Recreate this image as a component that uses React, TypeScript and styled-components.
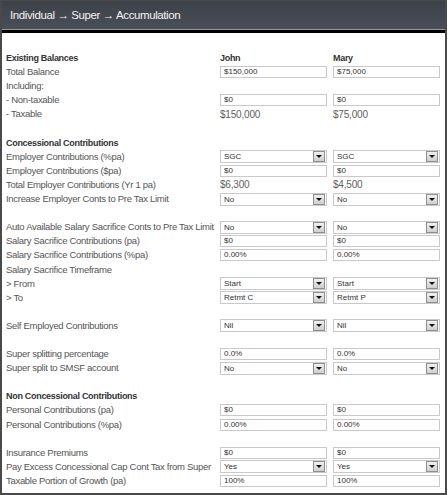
import React, { FC } from 'react';
import styled, { createGlobalStyle } from 'styled-components';

const GlobalStyle = createGlobalStyle`
  html, body {
    margin: 0;
    padding: 0;
    background: #ffffff;
  }
  body {
    font-family: "Liberation Sans", Arial, sans-serif;
  }
`;

const Panel = styled.div`
  width: 443px;
  height: 492px;
  border: 2px solid #4a4a4a;
  border-top: 1px solid #4a4a4a;
  box-sizing: content-box;
  background: #ffffff;
  overflow: hidden;
`;

const Header = styled.div`
  height: 28px;
  background: linear-gradient(#3d4148, #4a4f57);
  border-bottom: 1px solid #9a9a9a;
  display: flex;
  align-items: center;
  padding-left: 8px;
  color: #f2f2f2;
  font-size: 11.5px;
  letter-spacing: -0.4px;
`;

const HeaderRule = styled.div`
  height: 3px;
  background: #000000;
`;

const Body = styled.div`
  padding: 4px 5px 0 4px;
  display: grid;
  grid-template-columns: 208px 107px 107px;
  column-gap: 6px;
  grid-auto-rows: 14.1px;
`;

const Label = styled.div<{ $bold?: boolean }>`
  font-size: ${(p) => (p.$bold ? '9px' : '9.5px')};
  line-height: 14px;
  color: ${(p) => (p.$bold ? '#333333' : '#555555')};
  font-weight: ${(p) => (p.$bold ? 700 : 400)};
  letter-spacing: -0.3px;
  white-space: nowrap;
`;

const Cell = styled.div`
  display: flex;
  align-items: center;
`;

const Value = styled.span<{ $bold?: boolean }>`
  font-size: ${(p) => (p.$bold ? '9px' : '10px')};
  color: ${(p) => (p.$bold ? '#333333' : '#5e5e5e')};
  font-weight: ${(p) => (p.$bold ? 700 : 400)};
  letter-spacing: ${(p) => (p.$bold ? '-0.3px' : '-0.2px')};
`;

const Field = styled.div`
  width: 107px;
  height: 12px;
  box-sizing: border-box;
  border: 1px solid #c9c9c9;
  background: #ffffff;
  font-size: 8px;
  line-height: 10px;
  color: #333333;
  padding-left: 3px;
`;

const SelectBox = styled.div`
  width: 107px;
  height: 13px;
  box-sizing: border-box;
  border: 1px solid #c9c9c9;
  background: #ffffff;
  display: flex;
  align-items: center;
  justify-content: space-between;
  font-size: 8px;
  color: #333333;
  padding-left: 3px;
`;

const Arrow = styled.div`
  width: 12px;
  height: 11px;
  box-sizing: border-box;
  border: 1px solid #8e8e8e;
  background: linear-gradient(#f0f0f0, #cfcfcf);
  margin-right: 1px;
  display: flex;
  align-items: center;
  justify-content: center;

  &::after {
    content: '';
    border-left: 3px solid transparent;
    border-right: 3px solid transparent;
    border-top: 3px solid #111111;
  }
`;

type Kind = 'text' | 'input' | 'select';

interface RowDef {
  label: string;
  bold?: boolean;
  kind?: Kind;
  a?: string;
  b?: string;
}

const rows: RowDef[] = [
  { label: '' },
  { label: 'Existing Balances', bold: true, kind: 'text', a: 'John', b: 'Mary' },
  { label: 'Total Balance', kind: 'input', a: '$150,000', b: '$75,000' },
  { label: 'Including:' },
  { label: '- Non-taxable', kind: 'input', a: '$0', b: '$0' },
  { label: '- Taxable', kind: 'text', a: '$150,000', b: '$75,000' },
  { label: '' },
  { label: 'Concessional Contributions', bold: true },
  { label: 'Employer Contributions (%pa)', kind: 'select', a: 'SGC', b: 'SGC' },
  { label: 'Employer Contributions ($pa)', kind: 'input', a: '$0', b: '$0' },
  { label: 'Total Employer Contributions (Yr 1 pa)', kind: 'text', a: '$6,300', b: '$4,500' },
  { label: 'Increase Employer Conts to Pre Tax Limit', kind: 'select', a: 'No', b: 'No' },
  { label: '' },
  { label: 'Auto Available Salary Sacrifice Conts to Pre Tax Limit', kind: 'select', a: 'No', b: 'No' },
  { label: 'Salary Sacrifice Contributions (pa)', kind: 'input', a: '$0', b: '$0' },
  { label: 'Salary Sacrifice Contributions (%pa)', kind: 'input', a: '0.00%', b: '0.00%' },
  { label: 'Salary Sacrifice Timeframe' },
  { label: '> From', kind: 'select', a: 'Start', b: 'Start' },
  { label: '> To', kind: 'select', a: 'Retmt C', b: 'Retmt P' },
  { label: '' },
  { label: 'Self Employed Contributions', kind: 'select', a: 'Nil', b: 'Nil' },
  { label: '' },
  { label: 'Super splitting percentage', kind: 'input', a: '0.0%', b: '0.0%' },
  { label: 'Super split to SMSF account', kind: 'select', a: 'No', b: 'No' },
  { label: '' },
  { label: 'Non Concessional Contributions', bold: true },
  { label: 'Personal Contributions (pa)', kind: 'input', a: '$0', b: '$0' },
  { label: 'Personal Contributions (%pa)', kind: 'input', a: '0.00%', b: '0.00%' },
  { label: '' },
  { label: 'Insurance Premiums', kind: 'input', a: '$0', b: '$0' },
  { label: 'Pay Excess Concessional Cap Cont Tax from Super', kind: 'select', a: 'Yes', b: 'Yes' },
  { label: 'Taxable Portion of Growth (pa)', kind: 'input', a: '100%', b: '100%' },
];

const renderValue = (kind: Kind | undefined, value: string | undefined, bold?: boolean) => {
  if (!kind || value === undefined) return null;
  if (kind === 'input') return <Field>{value}</Field>;
  if (kind === 'select')
    return (
      <SelectBox>
        {value}
        <Arrow />
      </SelectBox>
    );
  return <Value $bold={bold}>{value}</Value>;
};

const App: FC = () => (
  <>
    <GlobalStyle />
    <Panel>
      <Header>Individual → Super → Accumulation</Header>
      <HeaderRule />
      <Body>
        {rows.map((row, idx) => (
          <React.Fragment key={idx}>
            <Label $bold={row.bold}>{row.label}</Label>
            <Cell>{renderValue(row.kind, row.a, row.bold)}</Cell>
            <Cell>{renderValue(row.kind, row.b, row.bold)}</Cell>
          </React.Fragment>
        ))}
      </Body>
    </Panel>
  </>
);

export default App;
